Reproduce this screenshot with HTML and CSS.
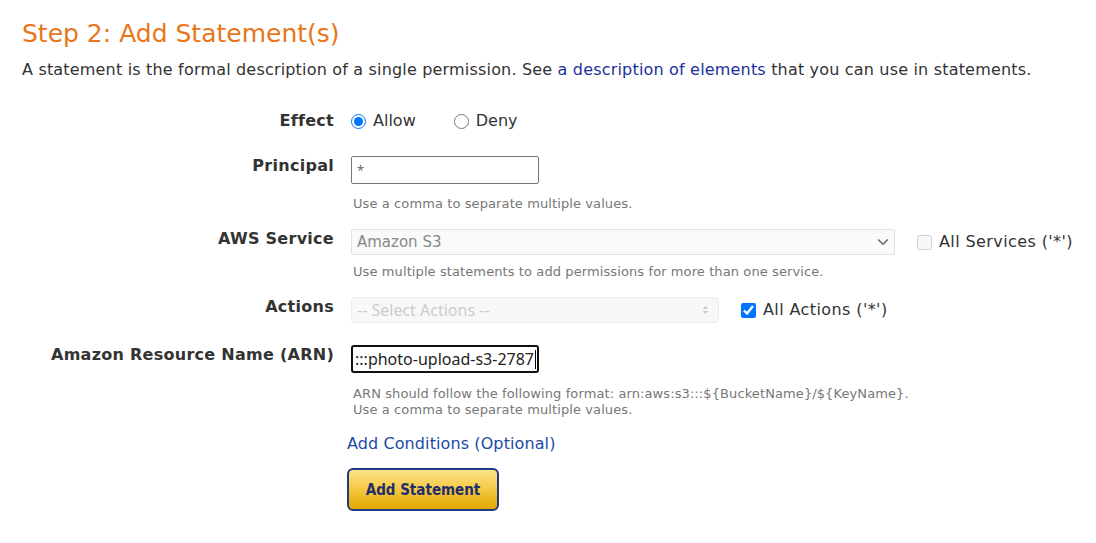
FILE: index.html
```html
<!DOCTYPE html>
<html>
<head>
<meta charset="utf-8">
<link rel="stylesheet" href="styles.css">
</head>
<body>
<div class="page">
  <h2 class="title">Step 2: Add Statement(s)</h2>
  <p class="intro">A statement is the formal description of a single permission. See <a class="link" href="#">a description of elements</a> that you can use in statements.</p>

  <div class="form">
    <div class="row row-effect">
      <div class="label">Effect</div>
      <div class="control">
        <div class="radios">
          <label class="radio"><input type="radio" name="effect" checked> Allow</label>
          <label class="radio"><input type="radio" name="effect"> Deny</label>
        </div>
      </div>
    </div>

    <div class="row row-principal">
      <div class="label">Principal</div>
      <div class="control">
        <div class="textbox plain">*</div>
        <div class="help help-principal">Use a comma to separate multiple values.</div>
      </div>
    </div>

    <div class="row row-service">
      <div class="label">AWS Service</div>
      <div class="control">
        <div class="inline">
          <div class="select select-service">
            <span>Amazon S3</span>
            <svg class="chev" width="12" height="8" viewBox="0 0 12 8"><path d="M1.2 1.5 L6 6.2 L10.8 1.5" fill="none" stroke="#666" stroke-width="1.6"/></svg>
          </div>
          <label class="check check-services"><input type="checkbox" disabled> All Services ('*')</label>
        </div>
        <div class="help help-service">Use multiple statements to add permissions for more than one service.</div>
      </div>
    </div>

    <div class="row row-actions">
      <div class="label">Actions</div>
      <div class="control">
        <div class="inline">
          <div class="select select-actions">
            <span>-- Select Actions --</span>
            <svg class="updown" width="7" height="10" viewBox="0 0 7 10"><path d="M0.8 4 L3.5 1 L6.2 4 Z M0.8 6 L3.5 9 L6.2 6 Z" fill="#c8c8c8"/></svg>
          </div>
          <label class="check check-actions"><input type="checkbox" checked> All Actions ('*')</label>
        </div>
      </div>
    </div>

    <div class="row row-arn">
      <div class="label">Amazon Resource Name (ARN)</div>
      <div class="control">
        <div class="textbox focused"><span class="val">:::photo-upload-s3-2787</span><span class="caret"></span></div>
        <div class="help help-arn">ARN should follow the following format: arn:aws:s3:::${BucketName}/${KeyName}.<br>Use a comma to separate multiple values.</div>
        <a class="cond" href="#">Add Conditions (Optional)</a>
        <button class="btn" type="button">Add Statement</button>
      </div>
    </div>
  </div>
</div>
</body>
</html>
```

FILE: styles.css
```css
html, body {
  margin: 0;
  padding: 0;
  background: #fff;
}
body {
  font-family: "DejaVu Sans", Verdana, sans-serif;
  color: #333;
}
.page {
  padding: 0 22px;
}
.title {
  margin: 0;
  padding-top: 17px;
  font-size: 25px;
  line-height: 33px;
  font-weight: normal;
  color: #e8761a;
}
.intro {
  margin: 8px 0 0;
  font-size: 16px;
  letter-spacing: 0.18px;
  line-height: 24px;
  color: #333;
}
.link {
  color: #1b2f9e;
  text-decoration: none;
}
.form {
  display: flex;
  flex-direction: column;
}
.row {
  display: grid;
  grid-template-columns: 312px 1fr;
  column-gap: 17px;
}
.label {
  text-align: right;
  font-weight: bold;
  font-size: 16px;
  letter-spacing: 0.27px;
  line-height: 20px;
  color: #333;
}
.row-effect { margin-top: 29px; }
.row-principal { margin-top: 25px; }
.row-service { margin-top: 17px; }
.row-actions { margin-top: 17px; }
.row-arn { margin-top: 22px; }
.control {
  display: flex;
  flex-direction: column;
  align-items: flex-start;
}
.radios {
  display: flex;
  gap: 38px;
}
.radio, .check {
  display: flex;
  align-items: center;
  font-size: 16px;
  line-height: 20px;
  color: #333;
}
.check { letter-spacing: 0.4px; }
.radio input {
  margin: 0 7px 0 0;
  width: 15px;
  height: 15px;
}
.textbox {
  box-sizing: border-box;
  width: 188px;
  height: 28px;
  border: 1px solid #767676;
  border-radius: 2px;
  padding: 0 5px;
  font-family: "Noto Sans", "Open Sans", sans-serif;
  font-size: 15px;
  line-height: 26px;
  color: #333;
  overflow: hidden;
  white-space: nowrap;
}
.textbox.plain {
  font-size: 13px;
  color: #666;
}
.textbox.focused {
  display: flex;
  justify-content: flex-end;
  border: 2px solid #111;
  border-radius: 3px;
  padding: 0 1px 0 0;
  line-height: 24px;
  font-size: 16px;
  color: #222;
}
.caret {
  display: inline-block;
  width: 1px;
  height: 19px;
  margin: 3px 0 0 1px;
  background: #000;
  flex: none;
}
.val { flex: none; }
.help {
  font-size: 13px;
  letter-spacing: 0.1px;
  line-height: 16px;
  color: #777;
  margin-left: 2px;
}
.help-principal { margin-top: 12px; }
.help-service { margin-top: 9px; }
.help-arn { margin-top: 13px; }
.inline {
  display: flex;
  align-items: center;
}
.select {
  box-sizing: border-box;
  height: 26px;
  display: flex;
  align-items: center;
  justify-content: space-between;
  border: 1px solid #e2e2e2;
  border-radius: 2px;
  background: #fafafa;
  padding: 0 6px 0 5px;
  font-size: 15px;
}
.select-service {
  width: 544px;
  color: #888;
  padding-right: 5px;
}
.select-actions {
  width: 368px;
  border-radius: 4px;
  background: #f8f8f8;
  border-color: #ececec;
  color: #ccc;
  font-family: "Noto Sans", "Open Sans", sans-serif;
  font-size: 16px;
  padding-right: 9px;
}
.check input {
  margin: 0 7px 0 0;
  width: 15px;
  height: 15px;
}
.check-services { margin-left: 22px; }
.check-actions { margin-left: 22px; }
.cond {
  margin-top: 16px;
  margin-left: -4px;
  font-size: 16px;
  letter-spacing: 0.1px;
  line-height: 20px;
  color: #1b4aa6;
  text-decoration: none;
}
.btn {
  margin-top: 14px;
  margin-left: -4px;
  box-sizing: border-box;
  width: 152px;
  height: 43px;
  border: 2px solid #1f3b80;
  border-radius: 6px;
  background: linear-gradient(#fde38a, #f5c842 50%, #e2a700);
  font-family: "DejaVu Sans", Verdana, sans-serif;
  font-stretch: condensed;
  font-weight: bold;
  font-size: 15px;
  color: #1f2d6a;
  padding: 0;
}
```
